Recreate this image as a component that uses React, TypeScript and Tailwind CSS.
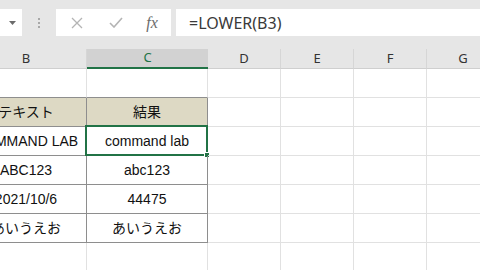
import React from 'react';

const cols = [
  { id: 'B', w: 121 },
  { id: 'C', w: 121 },
  { id: 'D', w: 73 },
  { id: 'E', w: 73 },
  { id: 'F', w: 73 },
  { id: 'G', w: 73 },
];

const table = [
  ['テキスト', '結果'],
  ['COMMAND LAB', 'command lab'],
  ['ABC123', 'abc123'],
  ['2021/10/6', '44475'],
  ['あいうえお', 'あいうえお'],
];

const GRID = 'border-[#e1e1e1]';
const EDGE = 'border-[#8e8e8e]';

function Toolbar() {
  return (
    <div className="flex h-[49px] items-start bg-[#e6e6e6] pt-[9px]">
      <div className="flex h-[27px] w-[22px] items-center justify-end bg-white pr-[6px]">
        <svg width="7" height="4" viewBox="0 0 7 4">
          <path d="M0 0h7L3.5 4z" fill="#6b6b6b" />
        </svg>
      </div>
      <div className="flex h-[27px] w-[34px] flex-col items-center justify-center gap-[2px]">
        <span className="h-[2px] w-[2px] bg-[#a8a8a8]" />
        <span className="h-[2px] w-[2px] bg-[#a8a8a8]" />
        <span className="h-[2px] w-[2px] bg-[#a8a8a8]" />
      </div>
      <div className="flex h-[27px] w-[115px] items-center bg-white">
        <div className="flex w-[42px] justify-center">
          <svg width="12" height="12" viewBox="0 0 12 12">
            <path d="M1 1l10 10M11 1L1 11" stroke="#b4b4b4" strokeWidth="1.3" fill="none" />
          </svg>
        </div>
        <div className="flex w-[35px] justify-center">
          <svg width="14" height="11" viewBox="0 0 14 11">
            <path d="M1 6l4 4L13 1" stroke="#b4b4b4" strokeWidth="1.6" fill="none" />
          </svg>
        </div>
        <div className="flex w-[38px] justify-center">
          <span className="text-[16px] italic leading-none text-[#6b6b6b]" style={{ fontFamily: '"Liberation Serif", serif' }}>
            fx
          </span>
        </div>
      </div>
      <div className="ml-[5px] flex h-[27px] flex-1 items-center bg-white pl-[13px]">
        <span className="text-[16px] leading-none text-[#3a3a3a]" style={{ fontFamily: '"Noto Sans", sans-serif' }}>
          =LOWER(B3)
        </span>
      </div>
    </div>
  );
}

function HeaderRow() {
  return (
    <div className="ml-[-34px] flex h-[20px] bg-[#e6e6e6]" style={{ fontFamily: '"Noto Sans", sans-serif' }}>
      {cols.map((c) =>
        c.id === 'C' ? (
          <div
            key={c.id}
            style={{ width: c.w }}
            className="flex shrink-0 items-center justify-center border-b-2 border-[#217346] bg-[#d2d2d2] text-[13px] text-[#217346]"
          >
            {c.id}
          </div>
        ) : (
          <div
            key={c.id}
            style={{ width: c.w }}
            className="flex shrink-0 items-center justify-center border-r border-b border-r-[#d6d6d6] border-b-[#cfcfcf] text-[13px] text-[#333]"
          >
            {c.id}
          </div>
        )
      )}
    </div>
  );
}

function Cell({ w, children, cls }: { w: number; children?: React.ReactNode; cls: string }) {
  return (
    <div style={{ width: w }} className={`relative flex h-[29px] shrink-0 items-center justify-center border-r border-b ${cls}`}>
      {children}
    </div>
  );
}

function Grid() {
  const rows = 7;
  return (
    <div
      className="ml-[-34px] text-[14px] text-[#111]"
      style={{ fontFamily: '"Liberation Sans", "Noto Sans CJK JP", sans-serif' }}
    >
      {Array.from({ length: rows }).map((_, r) => {
        const data = r >= 1 && r <= 5 ? table[r - 1] : null;
        return (
          <div key={r} className="flex">
            {cols.map((c, ci) => {
              const inTable = data && ci < 2;
              const aboveTable = r === 0 && ci < 2;
              let cls = GRID;
              if (inTable) {
                cls = EDGE;
                if (r === 1) cls += ' bg-[#ddd9c4]';
              } else if (aboveTable) {
                cls = 'border-r-[#e1e1e1] border-b-[#8e8e8e]';
              }
              return (
                <Cell key={c.id} w={c.w} cls={cls}>
                  {inTable && <span className="whitespace-nowrap">{data![ci]}</span>}
                  {r === 2 && ci === 1 && (
                    <div className="absolute left-[-2px] top-[-2px] h-[31px] w-[123px] border-2 border-[#217346]">
                      <div className="absolute bottom-[-4px] right-[-4px] h-[6px] w-[6px] border border-white bg-[#217346]" />
                    </div>
                  )}
                </Cell>
              );
            })}
          </div>
        );
      })}
    </div>
  );
}

export default function App() {
  return (
    <div className="h-[270px] w-[480px] overflow-hidden bg-white">
      <Toolbar />
      <HeaderRow />
      <Grid />
    </div>
  );
}
